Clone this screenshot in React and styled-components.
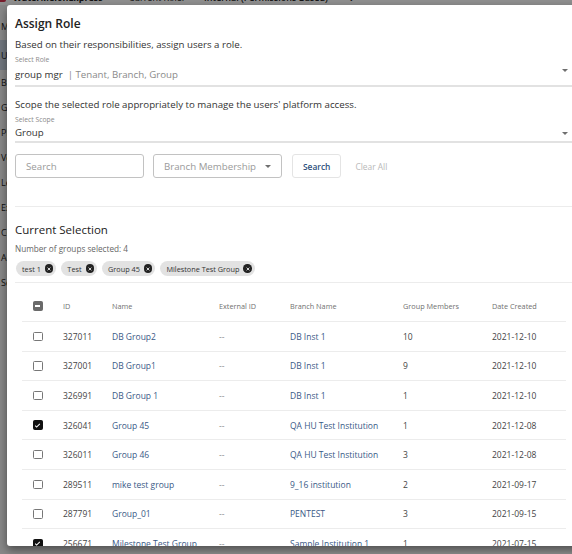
import React from "react";
import styled, { createGlobalStyle } from "styled-components";

const Global = createGlobalStyle`
  html, body { margin: 0; padding: 0; }
  body {
    font-family: "Open Sans", "Noto Sans", sans-serif;
    background: #fff;
    overflow: hidden;
  }
  * { box-sizing: border-box; }
`;

const Shell = styled.div`
  position: relative;
  width: 572px;
  height: 554px;
  overflow: hidden;
  background: #fff;
  display: flex;
  flex-direction: column;
`;

const TopBar = styled.div`
  height: 16px;
  margin-top: -11px;
  display: flex;
  align-items: center;
  font-size: 9px;
  color: #222;
  white-space: nowrap;
`;

const Logo = styled.span`
  width: 10px;
  height: 10px;
  margin-left: -4px;
  margin-right: 7px;
  background: #d4344f;
  border-radius: 2px;
`;

const Brand = styled.span`
  font-weight: 700;
  margin-right: 26px;
`;

const RoleLabel = styled.span`
  margin-right: 20px;
`;

const RoleValue = styled.span`
  font-weight: 600;
  margin-right: 20px;
`;

const Body = styled.div`
  flex: 1;
  display: flex;
`;

const Sidebar = styled.nav`
  width: 70px;
  display: flex;
  flex-direction: column;
  padding-top: 8px;
  background: #f2f2f2;
`;

const NavItem = styled.div`
  height: ${(p) => p.h || 25}px;
  display: flex;
  align-items: center;
  padding-left: 1px;
  font-size: 9px;
  color: #222;
  background: ${(p) => (p.active ? "#c9d4e2" : "transparent")};
`;

const Overlay = styled.div`
  position: absolute;
  inset: 0;
  background: rgba(0, 0, 0, 0.44);
`;

const Modal = styled.div`
  position: absolute;
  left: 7px;
  top: 5px;
  width: 580px;
  height: 541px;
  background: #fff;
  border-radius: 3px;
  box-shadow: 0 4px 10px rgba(0, 0, 0, 0.45);
  overflow: hidden;
  padding: 12px 15px 0 8px;
`;

const Title = styled.h2`
  margin: 0;
  font-size: 12px;
  line-height: 14px;
  font-weight: 600;
  color: #222;
`;

const Desc = styled.p`
  margin: ${(p) => p.mt}px 0 0;
  font-size: 9.7px;
  line-height: 14px;
  color: #333;
`;

const FieldLabel = styled.div`
  margin-top: 3px;
  font-size: 6.8px;
  line-height: 9px;
  color: #8a8a8a;
`;

const SelectField = styled.div`
  margin-top: ${(p) => p.mt}px;
  display: flex;
  align-items: ${(p) => (p.top ? "flex-start" : "center")};
  justify-content: space-between;
  padding-bottom: ${(p) => p.pb}px;
  border-bottom: 2px solid #e2e2e2;
  font-size: 9.7px;
  line-height: 14px;
  color: #333;
`;

const Muted = styled.span`
  color: #8a8a8a;
`;

const Arrow = styled.span`
  width: 0;
  height: 0;
  margin: ${(p) => (p.top ? "1px" : "0")} ${(p) => p.mr ?? 4}px 0 0;
  border-left: 3px solid transparent;
  border-right: 3px solid transparent;
  border-top: 3px solid #6f6f6f;
`;

const Filters = styled.div`
  margin-top: 11px;
  display: flex;
  align-items: center;
`;

const TextBox = styled.div`
  width: 129px;
  height: 24px;
  margin-right: ${(p) => p.mr}px;
  display: flex;
  align-items: center;
  justify-content: space-between;
  padding: 0 10px;
  border: 1px solid #c2c2c2;
  border-radius: 3px;
  font-size: 9.7px;
  color: #9a9a9a;
`;

const Button = styled.div`
  height: 24px;
  display: flex;
  align-items: center;
  padding: 0 ${(p) => (p.outlined ? 10 : 14)}px;
  margin-left: ${(p) => (p.outlined ? 0 : -1)}px;
  border: 1px solid ${(p) => (p.outlined ? "#e4e4e4" : "transparent")};
  border-radius: 3px;
  font-size: 8.4px;
  font-weight: ${(p) => (p.outlined ? 600 : 400)};
  color: ${(p) => (p.outlined ? "#2e4f7c" : "#b8b8b8")};
`;

const Divider = styled.hr`
  margin: ${(p) => p.mt}px 0 0;
  border: 0;
  border-top: 1px solid #ececec;
`;

const SectionTitle = styled.h3`
  margin: 15px 0 0;
  font-size: 11.5px;
  line-height: 16px;
  font-weight: 400;
  color: #222;
`;

const Count = styled.div`
  margin-top: 5px;
  font-size: 8.2px;
  line-height: 11px;
  color: #666;
`;

const Chips = styled.div`
  margin-top: 7px;
  display: flex;
  gap: 5px;
  padding-left: 1px;
`;

const Chip = styled.span`
  height: 15px;
  display: inline-flex;
  align-items: center;
  gap: 4px;
  padding: 0 3px 0 6px;
  background: #e2e2e2;
  border-radius: 8px;
  font-size: 7.3px;
  color: #333;
`;

const Close = styled.span`
  width: 8.5px;
  height: 8.5px;
  display: inline-flex;
  align-items: center;
  justify-content: center;
  border-radius: 50%;
  background: #222;
`;

const Table = styled.div`
  margin: 8px 6px 0 7px;
`;

const Row = styled.div`
  display: grid;
  grid-template-columns: 41px 49px 107px 71px 113px 89px 69px;
  align-items: center;
  height: ${(p) => (p.head ? 31 : 29.6)}px;
  border-bottom: 1px solid #ececec;
  font-size: ${(p) => (p.head ? 7.3 : 8.5)}px;
  color: ${(p) => (p.head ? "#707070" : "#444")};
`;

const Cell = styled.span`
  padding-left: ${(p) => (p.box ? 11 : 0)}px;
  display: flex;
  align-items: center;
  color: ${(p) => (p.link ? "#3a5986" : p.dim ? "#8a8a8a" : "inherit")};
  white-space: nowrap;
`;

const Box = styled.span`
  width: 9.5px;
  height: 9.5px;
  display: inline-flex;
  align-items: center;
  justify-content: center;
  border-radius: 1.5px;
  border: 1.4px solid ${(p) => (p.state === "mixed" ? "#6a6a6a" : p.state === "on" ? "#111" : "#777")};
  background: ${(p) => (p.state === "mixed" ? "#6a6a6a" : p.state === "on" ? "#111" : "#fff")};
`;

const Dash = styled.span`
  width: 5px;
  height: 1.4px;
  background: #fff;
`;

const nav = [
  { t: "My Account", h: 27 },
  { t: "Users", active: true, h: 30 },
  { t: "Billing" },
  { t: "Groups" },
  { t: "Platforms" },
  { t: "Versions" },
  { t: "Learners" },
  { t: "Exams" },
  { t: "Content" },
  { t: "Admin" },
  { t: "Settings" },
];

const rows = [
  ["327011", "DB Group2", "DB Inst 1", "10", "2021-12-10", false],
  ["327001", "DB Group1", "DB Inst 1", "9", "2021-12-10", false],
  ["326991", "DB Group 1", "DB Inst 1", "1", "2021-12-10", false],
  ["326041", "Group 45", "QA HU Test Institution", "1", "2021-12-08", true],
  ["326011", "Group 46", "QA HU Test Institution", "3", "2021-12-08", false],
  ["289511", "mike test group", "9_16 institution", "2", "2021-09-17", false],
  ["287791", "Group_01", "PENTEST", "3", "2021-09-15", false],
  ["256671", "Milestone Test Group", "Sample Institution 1", "1", "2021-07-15", true],
];

const chips = ["test 1", "Test", "Group 45", "Milestone Test Group"];

function CheckBox({ state }) {
  return (
    <Box state={state}>
      {state === "mixed" && <Dash />}
      {state === "on" && (
        <svg width="7" height="7" viewBox="0 0 24 24">
          <path d="M4 12.5l5 5L20 6.5" fill="none" stroke="#fff" strokeWidth="3.5" />
        </svg>
      )}
    </Box>
  );
}

export default function App() {
  return (
    <Shell>
      <Global />
      <TopBar>
        <Logo />
        <Brand>WaterMelonExpress</Brand>
        <RoleLabel>Current Role:</RoleLabel>
        <RoleValue>Internal (Permissions Based)</RoleValue>
        <span>∨</span>
      </TopBar>
      <Body>
        <Sidebar>
          {nav.map((n) => (
            <NavItem key={n.t} active={n.active} h={n.h}>
              {n.t}
            </NavItem>
          ))}
        </Sidebar>
      </Body>
      <Overlay />

      <Modal>
        <Title>Assign Role</Title>
        <Desc mt={7}>Based on their responsibilities, assign users a role.</Desc>
        <FieldLabel>Select Role</FieldLabel>
        <SelectField mt={4} pb={3} top>
          <span>
            group mgr <Muted>&nbsp;| Tenant, Branch, Group</Muted>
          </span>
          <Arrow top />
        </SelectField>

        <Desc mt={11}>Scope the selected role appropriately to manage the users' platform access.</Desc>
        <FieldLabel>Select Scope</FieldLabel>
        <SelectField mt={2} pb={1}>
          <span>Group</span>
          <Arrow />
        </SelectField>

        <Filters>
          <TextBox mr={9}>Search</TextBox>
          <TextBox mr={10}>
            Branch Membership
            <Arrow mr={0} />
          </TextBox>
          <Button outlined>Search</Button>
          <Button>Clear All</Button>
        </Filters>

        <Divider mt={28} />
        <SectionTitle>Current Selection</SectionTitle>
        <Count>Number of groups selected: 4</Count>
        <Chips>
          {chips.map((c) => (
            <Chip key={c}>
              {c}
              <Close>
                <svg width="4" height="4" viewBox="0 0 10 10">
                  <path d="M1.5 1.5l7 7M8.5 1.5l-7 7" stroke="#fff" strokeWidth="2" />
                </svg>
              </Close>
            </Chip>
          ))}
        </Chips>
        <Divider mt={6} />

        <Table>
          <Row head>
            <Cell box>
              <CheckBox state="mixed" />
            </Cell>
            <Cell>ID</Cell>
            <Cell>Name</Cell>
            <Cell>External ID</Cell>
            <Cell>Branch Name</Cell>
            <Cell>Group Members</Cell>
            <Cell>Date Created</Cell>
          </Row>
          {rows.map((r) => (
            <Row key={r[0]}>
              <Cell box>
                <CheckBox state={r[5] ? "on" : "off"} />
              </Cell>
              <Cell>{r[0]}</Cell>
              <Cell link>{r[1]}</Cell>
              <Cell dim>--</Cell>
              <Cell link>{r[2]}</Cell>
              <Cell>{r[3]}</Cell>
              <Cell>{r[4]}</Cell>
            </Row>
          ))}
        </Table>
      </Modal>
    </Shell>
  );
}
